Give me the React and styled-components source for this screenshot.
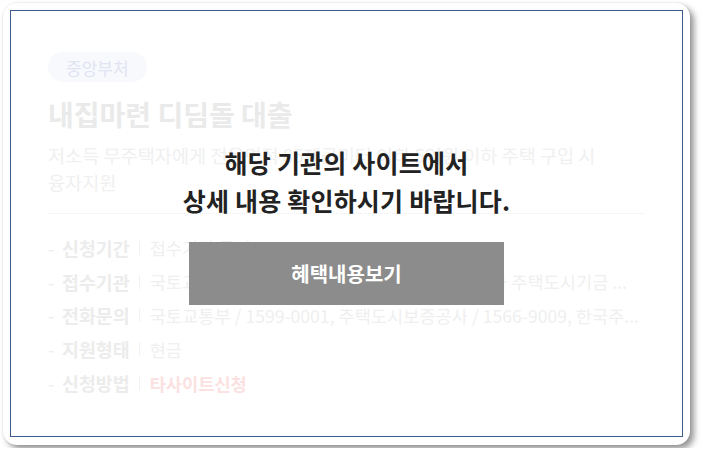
import React from "react";
import styled, { createGlobalStyle } from "styled-components";

const Global = createGlobalStyle`
  html, body { margin: 0; padding: 0; background: #ffffff; }
  body { font-family: "Noto Sans CJK KR", "Noto Sans", sans-serif; }
  * { box-sizing: border-box; }
`;

const Card = styled.div`
  margin: 3px;
  width: 687px;
  height: 442px;
  padding: 7px 7px 8px 7px;
  background: #ffffff;
  border-radius: 14px;
  box-shadow: 4px 4px 6px rgba(0, 0, 0, 0.42), 0 0 2px rgba(0, 0, 0, 0.12);
`;

const Frame = styled.div`
  position: relative;
  height: 100%;
  border: 1px solid #3d5b8c;
  padding: 41px 37px 0 37px;
  overflow: hidden;
`;

const Content = styled.div`
  display: flex;
  flex-direction: column;
  align-items: flex-start;
`;

const Tag = styled.span`
  display: inline-flex;
  align-items: center;
  justify-content: center;
  height: 30px;
  padding: 0 18px;
  border-radius: 15px;
  background: #f8f9fc;
  color: #e1e4f3;
  font-size: 17px;
`;

const Title = styled.h1`
  margin: 13px 0 0 0;
  font-size: 28px;
  line-height: 38px;
  font-weight: 700;
  color: #eaeaea;
`;

const Desc = styled.p`
  margin: 8px 0 0 0;
  font-size: 18.6px;
  line-height: 27px;
  color: #f0f0f0;
  width: 100%;
  word-break: keep-all;
`;

const Divider = styled.hr`
  align-self: stretch;
  margin: 18px 0 0 0;
  border: 0;
  border-top: 1px dotted #eeeeee;
`;

const List = styled.ul`
  list-style: none;
  margin: 17px 0 0 0;
  padding: 0;
  width: 100%;
`;

const Row = styled.li`
  display: flex;
  align-items: center;
  height: 33.8px;
  font-size: 18.4px;
  white-space: nowrap;
`;

const Dash = styled.span`
  color: #ededed;
  width: 14px;
`;

const Label = styled.span`
  font-weight: 700;
  color: #ececec;
`;

const Sep = styled.span`
  width: 1px;
  height: 14px;
  background: #f2f2f2;
  margin: 0 10px 0 9px;
`;

const Value = styled.span`
  flex: 1;
  min-width: 0;
  overflow: hidden;
  text-overflow: ellipsis;
  font-size: 17.6px;
  color: ${(p) => (p.$accent ? "#fbe1e1" : "#efefef")};
  font-weight: ${(p) => (p.$accent ? 700 : 400)};
`;

const Overlay = styled.div`
  position: absolute;
  inset: 0;
  display: flex;
  flex-direction: column;
  align-items: center;
  justify-content: center;
`;

const Message = styled.p`
  margin: 0;
  text-align: center;
  font-size: 25px;
  line-height: 38px;
  font-weight: 700;
  color: #222222;
  letter-spacing: 0.2px;
`;

const ViewButton = styled.button`
  margin-top: 23px;
  width: 315px;
  height: 63px;
  border: 0;
  background: #8c8c8c;
  color: #ffffff;
  font-family: inherit;
  font-size: 20px;
  font-weight: 700;
  cursor: pointer;
`;

const rows = [
  { label: "신청기간", value: "접수기관 문의" },
  {
    label: "접수기관",
    value: "국토교통부, 한국주택금융공사, 주택도시보증공사 주택도시기금 ...",
  },
  {
    label: "전화문의",
    value: "국토교통부 / 1599-0001, 주택도시보증공사 / 1566-9009, 한국주...",
  },
  { label: "지원형태", value: "현금" },
  { label: "신청방법", value: "타사이트신청", accent: true },
];

export default function App() {
  return (
    <>
      <Global />
      <Card>
        <Frame>
          <Content>
            <Tag>중앙부처</Tag>
            <Title>내집마련 디딤돌 대출</Title>
            <Desc>
              저소득 무주택자에게 전용면적 85제곱미터 이하 5억원 이하 주택 구입 시 융자지원
            </Desc>
            <Divider />
            <List>
              {rows.map((r) => (
                <Row key={r.label}>
                  <Dash>-</Dash>
                  <Label>{r.label}</Label>
                  <Sep />
                  <Value $accent={r.accent}>{r.value}</Value>
                </Row>
              ))}
            </List>
          </Content>
          <Overlay>
            <Message>
              해당 기관의 사이트에서
              <br />
              상세 내용 확인하시기 바랍니다.
            </Message>
            <ViewButton>혜택내용보기</ViewButton>
          </Overlay>
        </Frame>
      </Card>
    </>
  );
}
